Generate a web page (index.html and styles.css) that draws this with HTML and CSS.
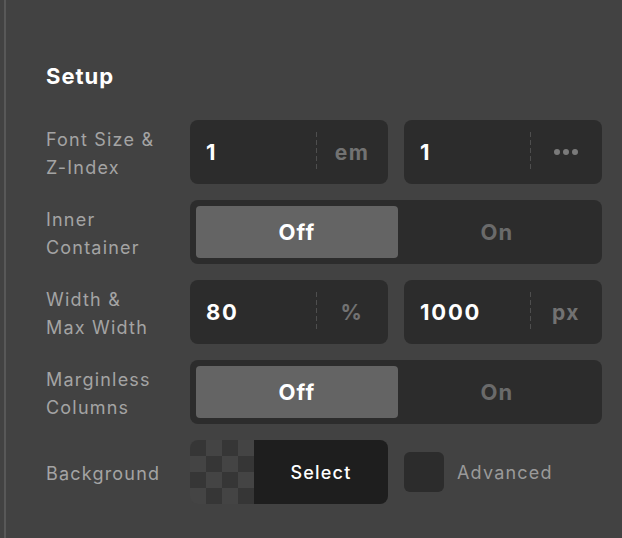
FILE: index.html
```html
<!DOCTYPE html>
<html lang="en">
<head>
    <meta charset="UTF-8">
    <meta name="viewport" content="width=device-width, initial-scale=1.0">
    <title>Section Setup</title>
    <link rel="stylesheet" href="styles.css">
</head>
<body>

    <div class="panel">
        <h2 class="panel-title">Setup</h2>

        <div class="field">
            <div class="field-label">Font Size &amp;<br>Z-Index</div>
            <div class="field-controls">
                <div class="unit-input">
                    <span class="value">1</span>
                    <span class="unit">em</span>
                </div>
                <div class="unit-input">
                    <span class="value">1</span>
                    <span class="unit"><span class="dots"><i></i><i></i><i></i></span></span>
                </div>
            </div>
        </div>

        <div class="field">
            <div class="field-label">Inner<br>Container</div>
            <div class="toggle">
                <span class="toggle-option active">Off</span>
                <span class="toggle-option">On</span>
            </div>
        </div>

        <div class="field">
            <div class="field-label">Width &amp;<br>Max Width</div>
            <div class="field-controls">
                <div class="unit-input">
                    <span class="value">80</span>
                    <span class="unit">%</span>
                </div>
                <div class="unit-input">
                    <span class="value">1000</span>
                    <span class="unit">px</span>
                </div>
            </div>
        </div>

        <div class="field">
            <div class="field-label">Marginless<br>Columns</div>
            <div class="toggle">
                <span class="toggle-option active">Off</span>
                <span class="toggle-option">On</span>
            </div>
        </div>

        <div class="field">
            <div class="field-label">Background</div>
            <div class="field-controls">
                <div class="bg-picker">
                    <span class="checker"></span>
                    <span class="bg-select">Select</span>
                </div>
                <label class="check">
                    <span class="check-box"></span>
                    <span class="check-text">Advanced</span>
                </label>
            </div>
        </div>
    </div>

</body>
</html>
```

FILE: styles.css
```css
body {
    margin: 0;
    background-color: #424242;
    font-family: Inter, "Open Sans", sans-serif;
    color: #a6a6a6;
}

.panel {
    margin-left: 4px;
    border-left: 2px solid #585858;
    min-height: 538px;
    box-sizing: border-box;
    padding: 62px 20px 0 40px;
}

.panel-title {
    margin: 0 0 30px;
    font-size: 22px;
    font-weight: 700;
    letter-spacing: 1px;
    color: #ffffff;
    line-height: 28px;
}

.field {
    display: flex;
    align-items: center;
    margin-bottom: 16px;
}

.field-label {
    width: 144px;
    padding-top: 4px;
    font-size: 18px;
    line-height: 28px;
    letter-spacing: 1.2px;
    color: #a4a4a4;
}

.field-controls {
    display: flex;
    gap: 16px;
    width: 412px;
    align-items: center;
}

.unit-input {
    display: flex;
    align-items: center;
    width: 198px;
    height: 64px;
    background-color: #2c2c2c;
    border-radius: 8px;
    box-sizing: border-box;
}

.value {
    flex: 1;
    padding-left: 16px;
    font-size: 22px;
    font-weight: 700;
    letter-spacing: 1.8px;
    color: #ffffff;
}

/* unit column, split off by a dashed rule */
.unit {
    width: 72px;
    height: 40px;
    display: flex;
    align-items: center;
    justify-content: center;
    background-image: linear-gradient(to bottom, #4e4e4e 5px, transparent 5px);
    background-size: 1px 8px;
    background-repeat: repeat-y;
    background-position: 0 0;
    font-size: 21px;
    font-weight: 700;
    letter-spacing: 1.5px;
    color: #727272;
}

.dots {
    display: flex;
    gap: 3px;
}

.dots i {
    width: 6px;
    height: 6px;
    border-radius: 50%;
    background-color: #7a7a7a;
}

.toggle {
    display: flex;
    width: 412px;
    height: 64px;
    padding: 6px;
    box-sizing: border-box;
    background-color: #2c2c2c;
    border-radius: 8px;
}

.toggle-option {
    flex: 1;
    display: flex;
    align-items: center;
    justify-content: center;
    font-size: 22px;
    font-weight: 700;
    letter-spacing: 1.2px;
    color: #6a6a6a;
    border-radius: 4px;
}

.toggle-option.active {
    flex: 0 0 202px;
    background-color: #646464;
    color: #ffffff;
}

.bg-picker {
    display: flex;
    width: 198px;
    height: 64px;
    border-radius: 8px;
    overflow: hidden;
}

.checker {
    width: 64px;
    background-color: #444444;
    background-image:
        linear-gradient(45deg, #363636 25%, transparent 25%, transparent 75%, #363636 75%),
        linear-gradient(45deg, #363636 25%, transparent 25%, transparent 75%, #363636 75%);
    background-size: 32px 32px;
    background-position: 16px 0, 0 16px;
}

.bg-select {
    flex: 1;
    display: flex;
    align-items: center;
    justify-content: center;
    background-color: #1e1e1e;
    color: #ffffff;
    font-size: 18px;
    font-weight: 500;
    letter-spacing: 1.2px;
}

.check {
    display: flex;
    align-items: center;
    gap: 13px;
}

.check-box {
    width: 40px;
    height: 40px;
    background-color: #2c2c2c;
    border-radius: 6px;
}

.check-text {
    font-size: 18px;
    letter-spacing: 1.2px;
    color: #9a9a9a;
}
```
